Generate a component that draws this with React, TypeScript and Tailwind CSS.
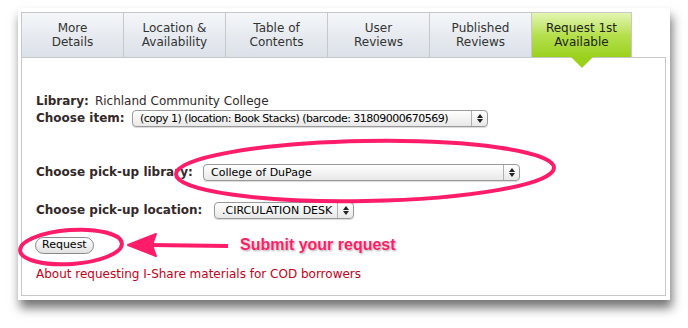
import React from "react";

const tabs = [
  ["More", "Details"],
  ["Location &", "Availability"],
  ["Table of", "Contents"],
  ["User", "Reviews"],
  ["Published", "Reviews"],
];

function Select({ text, w, tight }: { text: string; w: string; tight?: boolean }) {
  return (
    <div
      className={`${w} h-[17px] flex items-stretch rounded-[4px] border border-[#9a9a9a] bg-gradient-to-b from-white to-[#e8e8e8] shadow-[0_1px_1px_rgba(0,0,0,0.15)] text-[11px] text-black`}
    >
      <div className={`flex-1 flex items-center pl-[7px] whitespace-nowrap overflow-hidden leading-none ${tight ? "tracking-[-0.5px]" : ""}`}>{text}</div>
      <div className="w-[16px] border-l border-[#b0b0b0] flex flex-col items-center justify-center gap-[1px]">
        <svg width="6" height="4" viewBox="0 0 6 4"><path d="M3 0 L6 4 L0 4Z" fill="#222" /></svg>
        <svg width="6" height="4" viewBox="0 0 6 4"><path d="M0 0 L6 0 L3 4Z" fill="#222" /></svg>
      </div>
    </div>
  );
}

export default function App() {
  return (
    <div className="relative w-[688px] h-[328px] bg-white overflow-hidden" style={{ fontFamily: '"DejaVu Sans", sans-serif' }}>
      <div className="ml-[18px] mt-[8px] w-[652px] h-[292px] bg-white shadow-[2px_8px_10px_rgba(0,0,0,0.55)] pt-[4px] pl-[3px]">
        <div className="flex h-[45px]">
          {tabs.map((t, i) => (
            <div
              key={i}
              className="w-[102px] border-t border-l border-[#c8c8c8] bg-gradient-to-b from-[#f4f6f9] to-[#dbe1e8] flex flex-col items-center justify-center text-[12px] leading-[14px] text-[#333]"
            >
              <span>{t[0]}</span>
              <span>{t[1]}</span>
            </div>
          ))}
          <div className="relative w-[101px] border-t border-l border-r border-[#c8c8c8] bg-gradient-to-b from-[#e4f5b0] via-[#b6e04c] to-[#9bd11b] flex flex-col items-center justify-center text-[12px] leading-[14px] text-[#222]">
            <span>Request 1st</span>
            <span>Available</span>
            <svg className="absolute left-[39px] top-[44px]" width="22" height="11" viewBox="0 0 22 11">
              <path d="M0 0 L22 0 L11 11Z" fill="#9bd11b" />
            </svg>
          </div>
        </div>
        <div className="w-[645px] h-[239px] border border-[#c8c8c8] pl-[14px] pt-[35px] text-[12px] text-[#33292a]">
          <div className="h-[16px] flex items-center">
            <span className="font-bold">Library:</span>
            <span className="ml-[6px]">Richland Community College</span>
          </div>
          <div className="h-[18px] flex items-center">
            <span className="font-bold w-[96px]">Choose item:</span>
            <Select w="w-[356px]" tight text="(copy 1) (location: Book Stacks) (barcode: 31809000670569)" />
          </div>
          <div className="h-[36px]" />
          <div className="h-[18px] flex items-center">
            <span className="font-bold w-[167px]">Choose pick-up library:</span>
            <Select w="w-[317px]" text="College of DuPage" />
          </div>
          <div className="h-[20px]" />
          <div className="h-[18px] flex items-center">
            <span className="font-bold w-[178px]">Choose pick-up location:</span>
            <Select w="w-[140px]" text=".CIRCULATION DESK" />
          </div>
          <div className="h-[18px]" />
          <div className="h-[17px] flex items-center">
            <div className="h-[17px] px-[6px] rounded-full border border-[#8a8a8a] bg-gradient-to-b from-white to-[#e2e2e2] text-[11px] text-black flex items-center -ml-[1px]">
              Request
            </div>
          </div>
          <div className="h-[12px]" />
          <div className="h-[16px] flex items-center text-[#c4001a]">About requesting I-Share materials for COD borrowers</div>
        </div>
      </div>

      <svg className="absolute left-0 top-0 pointer-events-none" width="688" height="328" viewBox="0 0 688 328">
        <ellipse cx="365" cy="171" rx="189" ry="30" transform="rotate(-1 365 171)" fill="none" stroke="#ff1c68" strokeWidth="4" />
        <ellipse cx="71" cy="247" rx="51" ry="17" transform="rotate(-4 71 247)" fill="none" stroke="#ff1c68" strokeWidth="4" />
        <path d="M228 246 L150 245" stroke="#ff1c68" strokeWidth="4" fill="none" />
        <path d="M128 245 L156 234 L152 245 L156 256Z" fill="#ff1c68" stroke="#ff1c68" strokeWidth="2" strokeLinejoin="round" />
      </svg>
      <div
        className="absolute left-[240px] top-[235px] text-[16px] font-bold text-[#ff1c68] leading-[20px]"
        style={{ fontFamily: '"Liberation Sans", Arial, sans-serif', textShadow: "0 0 2px #fff, 1px 1px 2px rgba(0,0,0,0.4)" }}
      >
        Submit your request
      </div>
    </div>
  );
}
